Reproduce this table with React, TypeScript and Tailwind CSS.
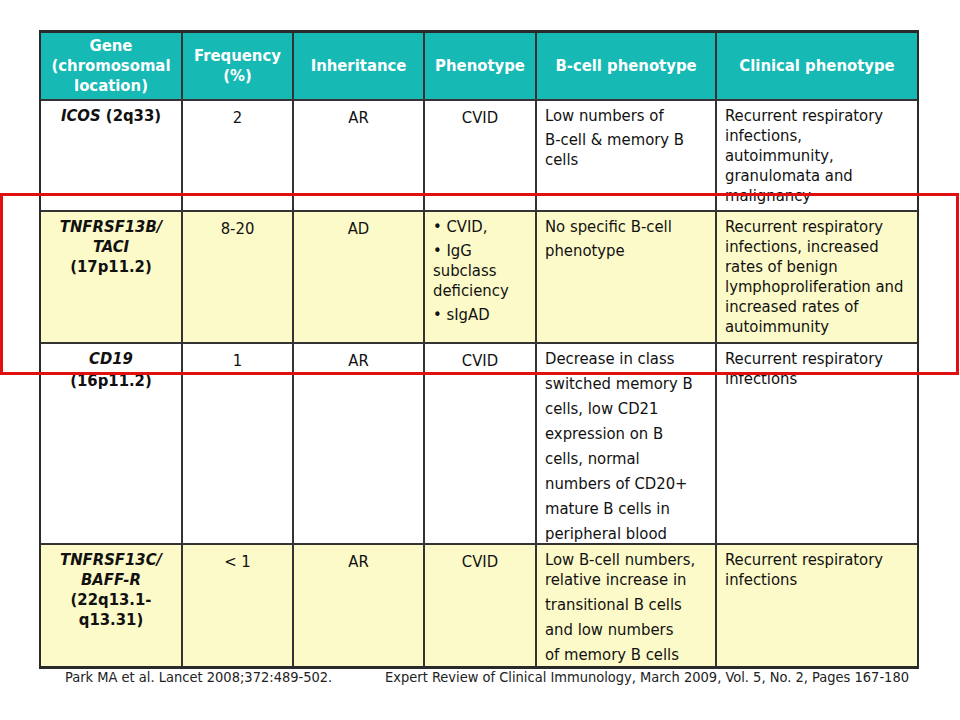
import type { ReactNode } from 'react';

const font = { fontFamily: '"DejaVu Sans Condensed", "DejaVu Sans", Tahoma, sans-serif' };

type Line = { text: ReactNode; gap?: number };

function Lines({ lines }: { lines: Line[] }) {
  return (
    <>
      {lines.map((l, i) => (
        <div key={i} className="whitespace-nowrap leading-[20px]" style={{ marginTop: l.gap ?? 0 }}>
          {l.text}
        </div>
      ))}
    </>
  );
}

function Cell({
  children,
  center,
  last,
  className = '',
}: {
  children?: ReactNode;
  center?: boolean;
  last?: boolean;
  className?: string;
}) {
  return (
    <div
      className={`box-border h-full pt-[5px] ${center ? 'text-center' : 'pl-[8px]'} ${
        last ? '' : 'border-r-2 border-[#333]'
      } ${className}`}
    >
      {children}
    </div>
  );
}

const cols = 'grid grid-cols-[142px_111px_131px_112px_180px_200px]';

export default function App() {
  return (
    <div className="relative h-[720px] w-[960px] bg-white text-[#111]" style={font}>
      <div className="pl-[39px] pt-[30px]">
        <div className="w-[880px] border-x-2 border-b-[3px] border-t-[3px] border-[#2a2a2a] text-[16.5px]">
          {/* header */}
          <div className={`${cols} h-[68px] border-b-2 border-[#333] bg-[#16b9b4] font-bold text-white`}>
            {[
              ['Gene', '(chromosomal', 'location)'],
              ['Frequency', '(%)'],
              ['Inheritance'],
              ['Phenotype'],
              ['B-cell phenotype'],
              ['Clinical phenotype'],
            ].map((h, i) => (
              <div
                key={i}
                className={`flex h-full flex-col items-center justify-center leading-[20px] ${
                  i < 5 ? 'border-r-2 border-[#333]' : ''
                }`}
              >
                {h.map((t) => (
                  <div key={t} className="whitespace-nowrap">
                    {t}
                  </div>
                ))}
              </div>
            ))}
          </div>

          {/* ICOS */}
          <div className={`${cols} h-[111px] border-b-2 border-[#333] bg-white`}>
            <Cell center className="font-bold">
              <Lines lines={[{ text: <><i>ICOS</i> (2q33)</> }]} />
            </Cell>
            <Cell center>2</Cell>
            <Cell center>AR</Cell>
            <Cell center>CVID</Cell>
            <Cell>
              <Lines lines={[{ text: 'Low numbers of' }, { text: 'B-cell & memory B', gap: 4 }, { text: 'cells' }]} />
            </Cell>
            <Cell last>
              <Lines
                lines={[
                  { text: 'Recurrent respiratory' },
                  { text: 'infections,' },
                  { text: 'autoimmunity,' },
                  { text: 'granulomata and' },
                  { text: 'malignancy' },
                ]}
              />
            </Cell>
          </div>

          {/* TACI */}
          <div className={`${cols} h-[132px] border-b-2 border-[#333] bg-[#fcfac8]`}>
            <Cell center className="font-bold">
              <Lines lines={[{ text: <i>TNFRSF13B/</i> }, { text: <i>TACI</i> }, { text: '(17p11.2)' }]} />
            </Cell>
            <Cell center>8-20</Cell>
            <Cell center>AD</Cell>
            <Cell>
              <Lines
                lines={[
                  { text: '• CVID,' },
                  { text: '• IgG', gap: 4 },
                  { text: 'subclass' },
                  { text: 'deficiency' },
                  { text: '• sIgAD', gap: 4 },
                ]}
              />
            </Cell>
            <Cell>
              <Lines lines={[{ text: 'No specific B-cell' }, { text: 'phenotype', gap: 4 }]} />
            </Cell>
            <Cell last>
              <Lines
                lines={[
                  { text: 'Recurrent respiratory' },
                  { text: 'infections, increased' },
                  { text: 'rates of benign' },
                  { text: 'lymphoproliferation and' },
                  { text: 'increased rates of' },
                  { text: 'autoimmunity' },
                ]}
              />
            </Cell>
          </div>

          {/* CD19 */}
          <div className={`${cols} h-[201px] border-b-2 border-[#333] bg-white`}>
            <Cell center className="font-bold">
              <Lines lines={[{ text: <i>CD19</i> }, { text: '(16p11.2)', gap: 2 }]} />
            </Cell>
            <Cell center>1</Cell>
            <Cell center>AR</Cell>
            <Cell center>CVID</Cell>
            <Cell>
              <Lines
                lines={[
                  { text: 'Decrease in class' },
                  { text: 'switched memory B', gap: 5 },
                  { text: 'cells, low CD21', gap: 5 },
                  { text: 'expression on B', gap: 5 },
                  { text: 'cells, normal', gap: 5 },
                  { text: 'numbers of CD20+', gap: 5 },
                  { text: 'mature B cells in', gap: 5 },
                  { text: 'peripheral blood', gap: 5 },
                ]}
              />
            </Cell>
            <Cell last>
              <Lines lines={[{ text: 'Recurrent respiratory' }, { text: 'infections' }]} />
            </Cell>
          </div>

          {/* BAFF-R */}
          <div className={`${cols} h-[121px] bg-[#fcfac8]`}>
            <Cell center className="font-bold">
              <Lines
                lines={[{ text: <i>TNFRSF13C/</i> }, { text: <i>BAFF-R</i> }, { text: '(22q13.1-' }, { text: 'q13.31)' }]}
              />
            </Cell>
            <Cell center>&lt; 1</Cell>
            <Cell center>AR</Cell>
            <Cell center>CVID</Cell>
            <Cell>
              <Lines
                lines={[
                  { text: 'Low B-cell numbers,' },
                  { text: 'relative increase in' },
                  { text: 'transitional B cells', gap: 5 },
                  { text: 'and low numbers', gap: 5 },
                  { text: 'of memory B cells', gap: 5 },
                ]}
              />
            </Cell>
            <Cell last>
              <Lines lines={[{ text: 'Recurrent respiratory' }, { text: 'infections' }]} />
            </Cell>
          </div>
        </div>

        <div className="-mt-[1px] flex text-[14.5px] leading-[18px] text-[#222]">
          <span className="ml-[26px] w-[320px] whitespace-nowrap">Park MA et al. Lancet 2008;372:489-502.</span>
          <span className="whitespace-nowrap">
            Expert Review of Clinical Immunology, March 2009, Vol. 5, No. 2, Pages 167-180
          </span>
        </div>
      </div>

      {/* highlight box */}
      <div className="pointer-events-none absolute left-0 top-[193px] h-[182px] w-[959px] border-[3px] border-[#e01010]" />
    </div>
  );
}
